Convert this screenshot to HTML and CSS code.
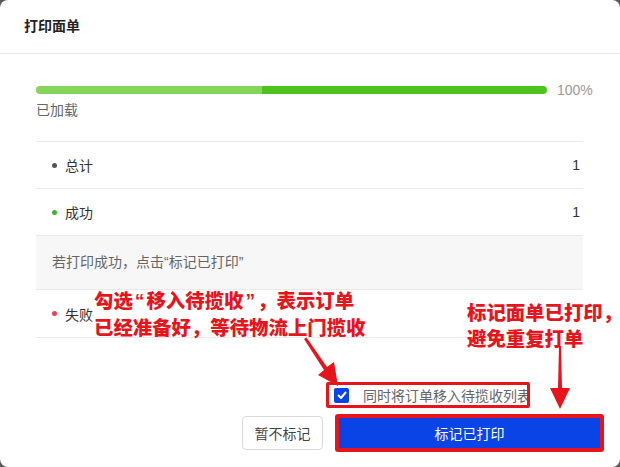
FILE: index.html
```html
<!DOCTYPE html>
<html>
<head>
    <title>打印面单</title>
    <link rel="stylesheet" href="styles.css">
</head>
<body>

<div class="dialog">
    <div class="dialog-header">打印面单</div>

    <div class="dialog-body">
        <div class="progress-row">
            <div class="progress-bar"></div>
            <span class="progress-text">100%</span>
        </div>
        <div class="progress-label">已加载</div>

        <div class="stat-list">
            <div class="stat-row">
                <span class="dot dot-total"></span>
                <span class="stat-name">总计</span>
                <span class="stat-num">1</span>
            </div>
            <div class="stat-row">
                <span class="dot dot-ok"></span>
                <span class="stat-name">成功</span>
                <span class="stat-num">1</span>
            </div>
            <div class="stat-tip">若打印成功，点击“标记已打印”</div>
            <div class="stat-row stat-last">
                <span class="dot dot-fail"></span>
                <span class="stat-name">失败</span>
            </div>
        </div>
    </div>

    <div class="dialog-footer">
        <label class="move-check">
            <span class="check-box">
                <svg width="10" height="8" viewBox="0 0 10 8"><path d="M1 4l3 3 5-6" fill="none" stroke="#fff" stroke-width="2"/></svg>
            </span>
            <span class="check-text">同时将订单移入待揽收列表</span>
        </label>
        <div class="btn-row">
            <button class="btn btn-default">暂不标记</button>
            <button class="btn btn-primary">标记已打印</button>
        </div>
    </div>

    <!-- annotations drawn over the dialog -->
    <div class="note note-left">勾选<span class="q">“</span>移入待揽收<span class="q">”</span>，表示订单<br>已经准备好，等待物流上门揽收</div>
    <div class="note note-right">标记面单已打印，<br>避免重复打单</div>
    <svg class="arrows" width="620" height="467" viewBox="0 0 620 467">
        <path d="M304 339 L306.5 337.5 L327 367 L334 362 L338 386 L318 375 L324 370 Z" fill="#e8141c"/>
        <path d="M559 346 L561 346 L562 388 L570 388 L560 409 L550 388 L558 388 Z" fill="#e8141c"/>
    </svg>
</div>

</body>
</html>
```

FILE: styles.css
```css
html, body {
    margin: 0;
    padding: 0;
}

body {
    background: #5a5a5a;
    font-family: "Liberation Sans", "Noto Sans CJK SC", sans-serif;
    font-size: 14px;
    color: #333;
}

.dialog {
    position: relative;
    width: 620px;
    height: 467px;
    background: #fff;
    border-radius: 8px;
    overflow: hidden;
}

.dialog-header {
    height: 53px;
    line-height: 53px;
    padding-left: 24px;
    font-weight: bold;
    color: #222;
    border-bottom: 1px solid #ebebeb;
}

.dialog-body {
    padding: 31px 37px 0 36px;
}

.progress-row {
    display: flex;
    align-items: center;
    height: 10px;
}

.progress-bar {
    flex-shrink: 0;
    width: 511px;
    height: 8px;
    border-radius: 4px;
    background: linear-gradient(to right, #85d55d 44.2%, #4fc21b 44.2%);
}

.progress-text {
    flex-shrink: 0;
    margin-left: 10px;
    color: #999;
}

.progress-label {
    margin-top: 5px;
    color: #666;
    line-height: 20px;
}

.stat-list {
    margin-top: 21px;
    border-top: 1px solid #ebebeb;
}

.stat-row {
    display: flex;
    align-items: center;
    height: 46px;
    padding: 0 3px 0 16px;
    border-bottom: 1px solid #ebebeb;
}

.stat-last {
    height: 47px;
}

.dot {
    width: 5px;
    height: 5px;
    border-radius: 50%;
    margin-right: 8px;
}

.dot-total { background: #555; }
.dot-ok { background: #3cb531; }
.dot-fail { background: #e8405a; }

.stat-name {
    flex: 1;
    color: #333;
}

.stat-num {
    color: #333;
}

.stat-tip {
    height: 53px;
    line-height: 53px;
    padding-left: 16px;
    background: #f7f7f7;
    color: #666;
    border-bottom: 1px solid #ebebeb;
}

.dialog-footer {
    display: flex;
    flex-direction: column;
    align-items: flex-end;
    padding: 44px 16px 0 0;
}

.move-check {
    display: flex;
    align-items: center;
    width: 198px;
    height: 20px;
    margin-right: 74px;
    border: 3px solid #e8141c;
    border-radius: 2px;
    overflow: hidden;
    white-space: nowrap;
}

.check-box {
    flex-shrink: 0;
    display: flex;
    align-items: center;
    justify-content: center;
    width: 15px;
    height: 15px;
    margin-left: 5px;
    background: #0b44e6;
    border-radius: 2px;
}

.check-text {
    margin-left: 14px;
    color: #666;
}

.btn-row {
    display: flex;
    align-items: center;
    gap: 12px;
    margin-top: 6px;
}

.btn {
    font-family: "Liberation Sans", "Noto Sans CJK SC", sans-serif;
    font-size: 14px;
    border-radius: 4px;
    cursor: pointer;
}

.btn-default {
    width: 81px;
    height: 34px;
    background: #fff;
    color: #444;
    border: 1px solid #d9d9d9;
}

.btn-primary {
    width: 269px;
    height: 38px;
    background: #0b44e6;
    color: #fff;
    border: 4px solid #e8141c;
    border-radius: 3px;
}

.note {
    position: absolute;
    color: #e8141c;
    font-family: "Noto Sans CJK SC", sans-serif;
    font-weight: 900;
    font-size: 19.4px;
    line-height: 26px;
    white-space: nowrap;
}

.note .q {
    font-family: "Liberation Sans", sans-serif;
    padding: 0 2px;
}

.note-left {
    left: 94px;
    top: 287px;
}

.note-right {
    left: 467px;
    top: 299px;
}

.arrows {
    position: absolute;
    left: 0;
    top: 0;
}
```
